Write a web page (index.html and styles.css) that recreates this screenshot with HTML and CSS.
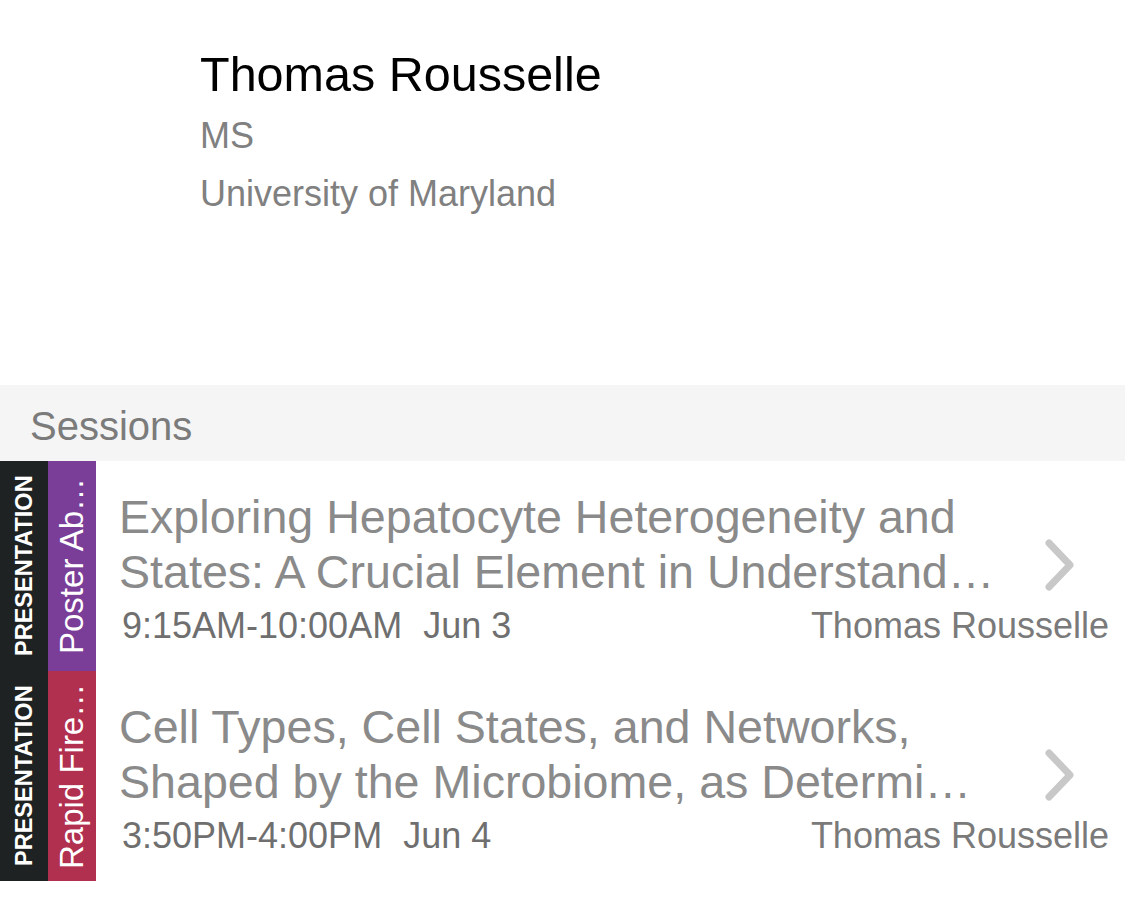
FILE: index.html
```html
<!DOCTYPE html>
<html lang="en">
<head>
<meta charset="utf-8">
<title>Thomas Rousselle</title>
<link rel="stylesheet" href="styles.css">
</head>
<body>
<section class="profile">
  <h1 class="profile-name">Thomas Rousselle</h1>
  <p class="profile-line profile-degree">MS</p>
  <p class="profile-line">University of Maryland</p>
</section>

<h2 class="section-header">Sessions</h2>

<ul class="sessions">
  <li class="session">
    <span class="tag tag-type">PRESENTATION</span>
    <span class="tag tag-track tag-poster">Poster Ab…</span>
    <div class="session-body">
      <p class="session-title">Exploring Hepatocyte Heterogeneity and States: A Crucial Element in Understand…</p>
      <svg class="chevron" width="30" height="52" viewBox="0 0 30 52" aria-hidden="true"><path d="M4 4 L25 26 L4 48"/></svg>
      <div class="session-meta">
        <span class="session-when"><span>9:15AM-10:00AM</span><span class="session-date">Jun 3</span></span>
        <span class="session-speaker">Thomas Rousselle</span>
      </div>
    </div>
  </li>
  <li class="session">
    <span class="tag tag-type">PRESENTATION</span>
    <span class="tag tag-track tag-rapid">Rapid Fire…</span>
    <div class="session-body">
      <p class="session-title">Cell Types, Cell States, and Networks, Shaped by the Microbiome, as Determi…</p>
      <svg class="chevron" width="30" height="52" viewBox="0 0 30 52" aria-hidden="true"><path d="M4 4 L25 26 L4 48"/></svg>
      <div class="session-meta">
        <span class="session-when"><span>3:50PM-4:00PM</span><span class="session-date">Jun 4</span></span>
        <span class="session-speaker">Thomas Rousselle</span>
      </div>
    </div>
  </li>
</ul>
</body>
</html>
```

FILE: styles.css
```css
html, body {
  margin: 0;
  padding: 0;
  background: #ffffff;
}

body {
  font-family: "Liberation Sans", Arial, Helvetica, sans-serif;
  width: 1125px;
}

.profile {
  padding: 41px 0 162px 200px;
}

.profile-name {
  margin: 0;
  font-size: 48.5px;
  font-weight: 400;
  line-height: 66px;
  color: #000000;
}

.profile-line {
  margin: 0;
  font-size: 36px;
  line-height: 58px;
  color: #808080;
}

.section-header {
  margin: 0;
  height: 76px;
  box-sizing: border-box;
  padding: 8px 0 0 30px;
  background: #f5f5f5;
  font-size: 40px;
  font-weight: 400;
  line-height: 67px;
  color: #7b7b7b;
}

.sessions {
  list-style: none;
  margin: 0;
  padding: 0;
}

.session {
  display: flex;
  align-items: stretch;
}

.tag {
  flex: none;
  width: 48px;
  box-sizing: border-box;
  padding: 10px 0;
  contain: size;
  writing-mode: vertical-rl;
  transform: rotate(180deg);
  line-height: 48px;
  text-align: center;
  white-space: nowrap;
  overflow: hidden;
  text-overflow: ellipsis;
  color: #ffffff;
}

.tag-type {
  background: #1f2222;
  font-size: 23.5px;
  font-weight: 700;
}

.tag-track {
  font-size: 33px;
  font-weight: 400;
}

.tag-poster {
  background: #7a3d98;
}

.tag-rapid {
  background: #b1304f;
}

.session-body {
  flex: 1;
  min-width: 0;
  display: grid;
  grid-template-columns: 1fr 96px;
  grid-template-rows: auto auto;
  padding: 29px 16px 25px 23px;
}

.session-title {
  grid-column: 1;
  grid-row: 1;
  margin: 0;
  font-size: 46.6px;
  line-height: 55px;
  color: #8a8a8a;
  display: -webkit-box;
  -webkit-line-clamp: 2;
  -webkit-box-orient: vertical;
  overflow: hidden;
}

.chevron {
  grid-column: 2;
  grid-row: 1 / 3;
  align-self: center;
  margin: 0 0 6px 32px;
}

.chevron path {
  fill: none;
  stroke: #c8c8c8;
  stroke-width: 7;
  stroke-linecap: round;
  stroke-linejoin: round;
}

.session-meta {
  grid-column: 1 / -1;
  grid-row: 2;
  display: flex;
  justify-content: space-between;
  margin-top: 6px;
  padding-left: 3px;
  font-size: 36px;
  line-height: 40px;
}

.session-when {
  color: #6f6f6f;
}

.session-date {
  margin-left: 21px;
}

.session-speaker {
  color: #7a7a7a;
}
```
